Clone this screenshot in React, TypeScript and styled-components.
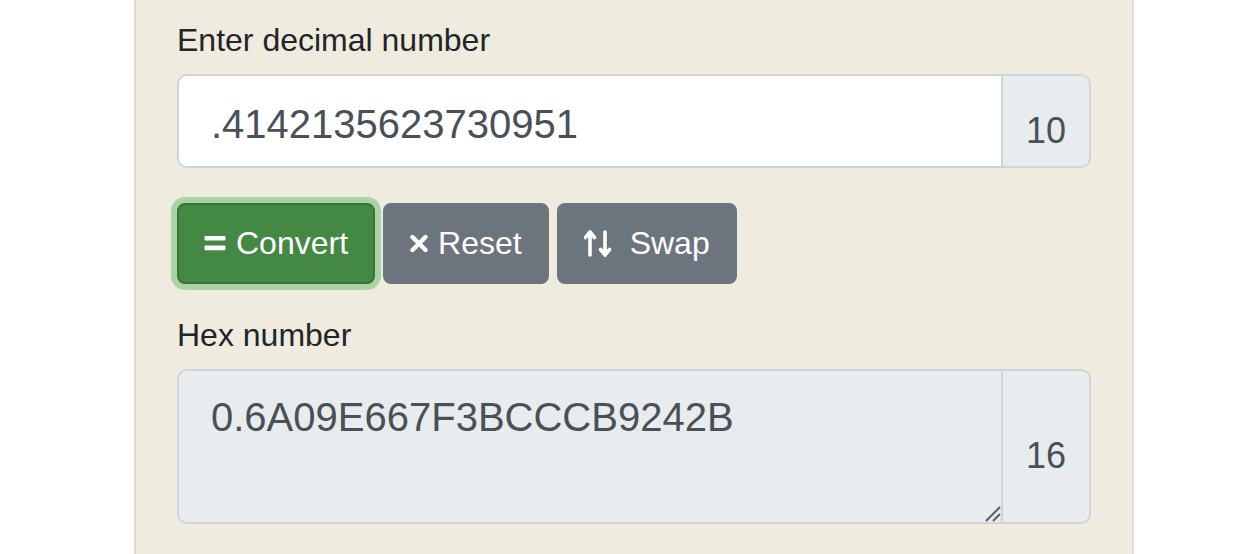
import React from "react";
import styled, { createGlobalStyle } from "styled-components";

const Global = createGlobalStyle`
  html, body { margin: 0; padding: 0; background: #ffffff; }
  body { font-family: "Liberation Sans", Arial, sans-serif; }
  * { box-sizing: border-box; }
`;

const Page = styled.div`
  display: flex;
  min-height: 554px;
  padding-left: 134px;
`;

const Panel = styled.main`
  width: 1000px;
  min-height: 554px;
  background: #efecdf;
  border-left: 2px solid #dedcd3;
  border-right: 2px solid #dedcd3;
  padding: 16px 41px 0 41px;
  display: flex;
  flex-direction: column;
`;

const Label = styled.label<{ $top?: number }>`
  display: block;
  font-size: 32px;
  line-height: 48px;
  color: #212529;
  margin-top: ${(p) => p.$top ?? 0}px;
  margin-bottom: 10px;
`;

const Group = styled.div<{ $h: number }>`
  display: flex;
  height: ${(p) => p.$h}px;
`;

const TextInput = styled.input`
  flex: 1;
  min-width: 0;
  height: 100%;
  border: 2px solid #ced4da;
  border-radius: 10px 0 0 10px;
  background: #ffffff;
  padding: 6px 32px 0 32px;
  font-family: inherit;
  font-size: 40px;
  color: #495057;
  outline: none;
`;

const AreaWrap = styled.div`
  position: relative;
  flex: 1;
  min-width: 0;
  height: 100%;
`;

const Area = styled.textarea`
  display: block;
  width: 100%;
  height: 100%;
  border: 2px solid #ced4da;
  border-radius: 10px 0 0 10px;
  background: #e9ecef;
  padding: 16px 32px;
  font-family: inherit;
  font-size: 40px;
  line-height: 60px;
  color: #495057;
  resize: none;
  outline: none;
`;

const Grip = styled.svg`
  position: absolute;
  right: 2px;
  bottom: 2px;
`;

const Addon = styled.div`
  width: 88px;
  height: 100%;
  display: flex;
  align-items: center;
  justify-content: center;
  padding-top: 19px;
  background: #e9ecef;
  border: 2px solid #ced4da;
  border-left: 0;
  border-radius: 0 10px 10px 0;
  font-size: 36px;
  color: #495057;
`;

const Buttons = styled.div`
  display: flex;
  gap: 8px;
  margin-top: 35px;
`;

const Btn = styled.button<{ $variant: "success" | "secondary"; $focus?: boolean }>`
  display: inline-flex;
  align-items: center;
  gap: 10px;
  height: 81px;
  padding: 0 25px;
  border-radius: 8px;
  font-family: inherit;
  font-size: 32px;
  color: #ffffff;
  cursor: pointer;
  background: ${(p) => (p.$variant === "success" ? "#438843" : "#6c747d")};
  border: 2px solid ${(p) => (p.$variant === "success" ? "#377537" : "#6c747d")};
  box-shadow: ${(p) => (p.$focus ? "0 0 0 6px #acd3a6" : "none")};
`;

const Icon = styled.svg`
  display: block;
  flex: none;
`;

const EqualsIcon = () => (
  <Icon width="22" height="15" viewBox="0 0 22 15">
    <rect x="0.5" y="0" width="21" height="4.6" rx="1" fill="#fff" />
    <rect x="0.5" y="9.6" width="21" height="4.6" rx="1" fill="#fff" />
  </Icon>
);

const TimesIcon = () => (
  <Icon width="18" height="19" viewBox="0 0 18 19">
    <path d="M2.5 3 L15.5 16 M15.5 3 L2.5 16" stroke="#fff" strokeWidth="4.4" strokeLinecap="round" />
  </Icon>
);

const SwapIcon = () => (
  <Icon width="36" height="27" viewBox="0 0 36 27">
    <g fill="none" stroke="#fff" strokeWidth="3.6" strokeLinecap="round" strokeLinejoin="round">
      <path d="M6 25 V2.5 M1.5 7.5 L6 2 L10.5 7.5" />
      <path d="M21 2 V24.5 M16.5 19.5 L21 25 L25.5 19.5" />
    </g>
  </Icon>
);

export default function App() {
  return (
    <>
      <Global />
      <Page>
        <Panel>
          <Label htmlFor="dec">Enter decimal number</Label>
          <Group $h={94}>
            <TextInput id="dec" defaultValue=".4142135623730951" />
            <Addon>10</Addon>
          </Group>
          <Buttons>
            <Btn $variant="success" $focus>
              <EqualsIcon />
              Convert
            </Btn>
            <Btn $variant="secondary">
              <TimesIcon />
              Reset
            </Btn>
            <Btn $variant="secondary">
              <SwapIcon />
              Swap
            </Btn>
          </Buttons>
          <Label $top={27} htmlFor="hex">Hex number</Label>
          <Group $h={155}>
            <AreaWrap>
              <Area id="hex" readOnly rows={2} value="0.6A09E667F3BCCCB9242B" />
              <Grip width="16" height="16" viewBox="0 0 16 16">
                <path d="M1 15 L15 1 M8 15 L15 8" stroke="#5a5d61" strokeWidth="2" />
              </Grip>
            </AreaWrap>
            <Addon>16</Addon>
          </Group>
        </Panel>
      </Page>
    </>
  );
}
